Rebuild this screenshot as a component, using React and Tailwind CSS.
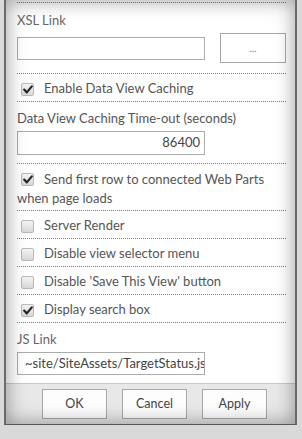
import React from "react";

const font = { fontFamily: 'Lato, "Open Sans", sans-serif' };

function Dots() {
  return <div className="h-0 border-t border-dotted border-[#6f7f96]" />;
}

function Check({ checked }) {
  return (
    <span className="w-[13px] h-[13px] rounded-[2px] border border-[#b9b9b9] bg-gradient-to-b from-[#f4f4f4] to-[#d8d8d8] flex items-center justify-center flex-shrink-0">
      {checked && (
        <svg width="10" height="9" viewBox="0 0 10 9">
          <path d="M1.2 4.6 L3.8 7.4 L8.8 1.4" fill="none" stroke="#262626" strokeWidth="2.2" strokeLinecap="round" strokeLinejoin="round" />
        </svg>
      )}
    </span>
  );
}

function CheckRow({ checked, label }) {
  return (
    <div className="h-[27px] flex items-center pt-[3px] pl-[4px] gap-[10px] text-[13px] text-[#555]">
      <Check checked={checked} />
      <span>{label}</span>
    </div>
  );
}

function Btn({ children }) {
  return (
    <button className="w-[65px] h-[30px] border border-[#a8a8a8] bg-[#fdfdfd] text-[12.5px] text-[#444]">
      {children}
    </button>
  );
}

export default function App() {
  return (
    <div className="w-[302px] h-[439px] bg-[#d9d9d9] overflow-hidden" style={font}>
      <div className="relative ml-[4px] w-[293px] h-[425px] border-x-2 border-[#6a6a6a] border-b border-b-[#555] bg-white flex flex-col">
        <div className="px-[11px] pr-[9px] flex flex-col flex-1">
          <div className="mt-[2px]">
            <Dots />
          </div>

          <div className="h-[70px] flex flex-col">
            <div className="mt-[8px] h-[18px] text-[13px] text-[#666] leading-[18px]">XSL Link</div>
            <div className="mt-[4px] flex items-center justify-between">
              <div className="w-[188px] h-[23px] border border-[#ababab] bg-white" />
              <div className="w-[66px] h-[30px] border border-[#a8a8a8] bg-white flex items-center justify-center text-[10px] text-[#777]">
                ...
              </div>
            </div>
          </div>
          <Dots />
          <CheckRow checked label="Enable Data View Caching" />
          <Dots />

          <div className="h-[61px] flex flex-col">
            <div className="mt-[7px] h-[18px] text-[13px] text-[#555] leading-[18px]">
              Data View Caching Time-out (seconds)
            </div>
            <div className="mt-[4px] w-[188px] h-[24px] border border-[#ababab] bg-white flex items-center justify-end pr-[4px] text-[13px] text-[#444]">
              86400
            </div>
          </div>
          <Dots />

          <div className="h-[46px] pt-[6px] text-[13px] text-[#555] leading-[19px]">
            <div className="flex items-center gap-[10px] pl-[4px]">
              <Check checked />
              <span>Send first row to connected Web Parts</span>
            </div>
            <div>when page loads</div>
          </div>
          <Dots />
          <CheckRow label="Server Render" />
          <Dots />
          <CheckRow label="Disable view selector menu" />
          <Dots />
          <CheckRow label="Disable 'Save This View' button" />
          <Dots />
          <CheckRow checked label="Display search box" />
          <Dots />

          <div className="flex flex-col">
            <div className="mt-[7px] h-[18px] text-[13px] text-[#666] leading-[18px]">JS Link</div>
            <div className="mt-[4px] w-[188px] h-[23px] border border-[#ababab] bg-white flex items-center pl-[7px] text-[13px] text-[#444] overflow-hidden whitespace-nowrap">
              <span className="overflow-hidden">~site/SiteAssets/TargetStatus.js</span>
            </div>
          </div>
        </div>

        <div className="h-[41px] border-t border-[#c9c9c9] bg-[#e8e8e8] flex items-start pt-[5px] pl-[36px] gap-[15px]">
          <Btn>OK</Btn>
          <Btn>Cancel</Btn>
          <Btn>Apply</Btn>
        </div>

        <div className="pointer-events-none absolute inset-0 shadow-[inset_0_0_20px_rgba(0,0,0,0.4)]" />
      </div>
    </div>
  );
}
